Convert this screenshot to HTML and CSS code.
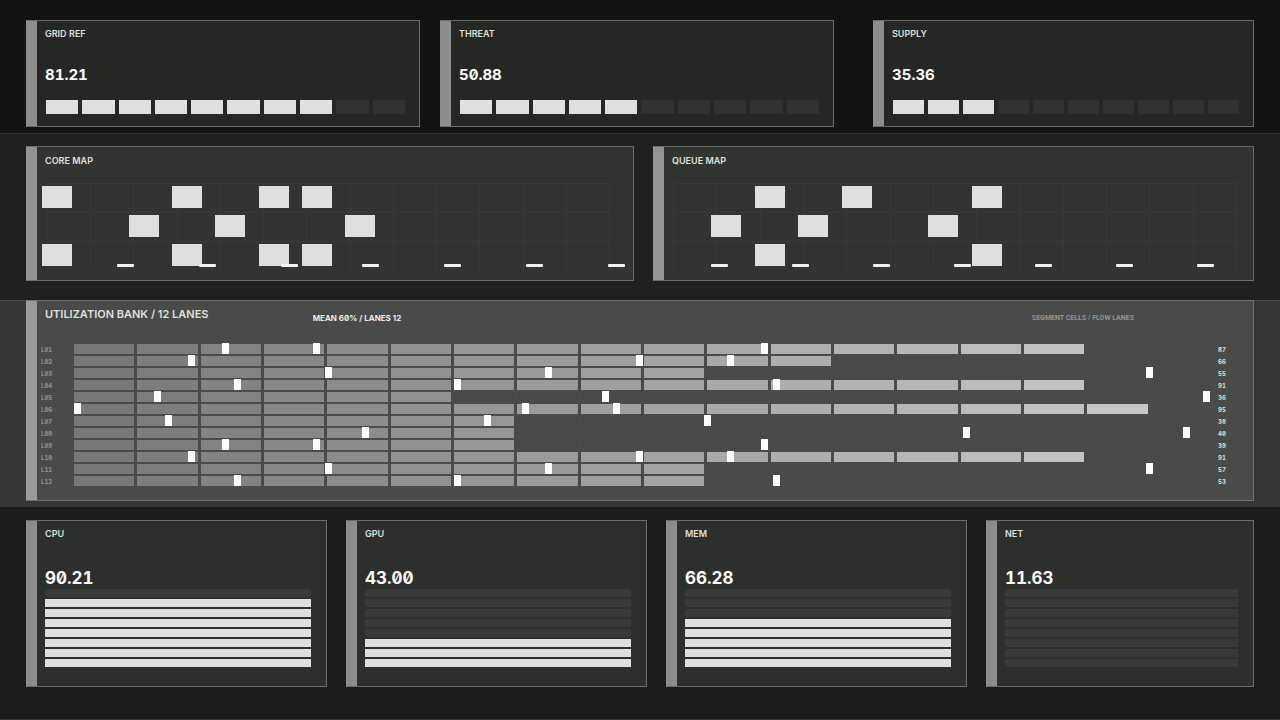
FILE: index.html
```html
<!DOCTYPE html>
<html lang="en">
<head>
<meta charset="utf-8">
<meta name="viewport" content="width=device-width, initial-scale=1">
<title>Utilization Bank</title>
<link rel="stylesheet" href="styles.css">
</head>
<body>
<main>
  <section class="band band-status">
    <article class="panel gauge">
      <h2 class="label">GRID REF</h2>
      <p class="value">81.21</p>
      <div class="cells" data-total="10" data-on="8"></div>
    </article>
    <article class="panel gauge">
      <h2 class="label">THREAT</h2>
      <p class="value">50.88</p>
      <div class="cells" data-total="10" data-on="5"></div>
    </article>
    <article class="panel gauge gauge-apart">
      <h2 class="label">SUPPLY</h2>
      <p class="value">35.36</p>
      <div class="cells" data-total="10" data-on="3"></div>
    </article>
  </section>

  <section class="band band-maps">
    <article class="panel map map-core">
      <h2 class="label">CORE MAP</h2>
      <div class="board" data-rows="0,3,5,6|2,4,7|0,3,5,6"></div>
      <div class="dashes"></div>
    </article>
    <article class="panel map map-queue">
      <h2 class="label">QUEUE MAP</h2>
      <div class="board" data-rows="2,4,7|1,3,6|2,7"></div>
      <div class="dashes"></div>
    </article>
  </section>

  <section class="band band-bank">
    <article class="panel bank">
      <header class="bank-head">
        <h1 class="bank-title">UTILIZATION BANK / 12 LANES</h1>
        <p class="bank-mean">MEAN 60% / LANES 12</p>
        <p class="bank-note">SEGMENT CELLS / FLOW LANES</p>
      </header>
      <div class="lanes"></div>
    </article>
  </section>

  <section class="band band-load">
    <article class="panel load">
      <h2 class="label">CPU</h2>
      <p class="value value-large">90.21</p>
      <div class="stack" data-total="8" data-on="7"></div>
    </article>
    <article class="panel load">
      <h2 class="label">GPU</h2>
      <p class="value value-large">43.00</p>
      <div class="stack" data-total="8" data-on="3"></div>
    </article>
    <article class="panel load">
      <h2 class="label">MEM</h2>
      <p class="value value-large">66.28</p>
      <div class="stack" data-total="8" data-on="5"></div>
    </article>
    <article class="panel load">
      <h2 class="label">NET</h2>
      <p class="value value-large">11.63</p>
      <div class="stack" data-total="8" data-on="0"></div>
    </article>
  </section>
</main>
<script src="dashboard.js"></script>
</body>
</html>
```

FILE: styles.css
```css
* {
  box-sizing: border-box;
}

body {
  margin: 0;
  background: #1a1c19;
  color: #dee0dd;
  font-family: Inter, Roboto, sans-serif;
  font-feature-settings: "zero" 1, "tnum" 1;
}

h1, h2, p {
  margin: 0;
}

/* Full-width bands */
.band {
  display: grid;
  padding: 0 26px;
}

.band-status {
  grid-template-columns: 394fr 394fr 400fr;
  column-gap: 20px;
  padding-top: 20px;
  padding-bottom: 6px;
  background: #111410;
}

.band-maps {
  grid-template-columns: 608fr 601fr;
  column-gap: 19px;
  padding-top: 12px;
  padding-bottom: 19px;
  border-top: 1px solid #313330;
  background: #1f211e;
}

.band-bank {
  padding-bottom: 6px;
  background: #353734;
  border-top: 1px solid #454744;
}

.band-load {
  grid-template-columns: 301fr 301fr 301fr 268fr;
  column-gap: 19px;
  padding-top: 13px;
  padding-bottom: 32px;
  border-bottom: 1px solid #343633;
  background: #1a1c19;
}

/* Panels with a thick left rail */
.panel {
  --rail: #8c8e8b;
  --fill: #252724;
  position: relative;
  padding: 7px 15px 12px 18px;
  border: 1px solid #6a6c69;
  border-left-color: var(--rail);
  background: linear-gradient(to right, var(--rail) 10px, var(--fill) 10px);
}

.label {
  font-size: 9px;
  font-weight: 600;
  line-height: 12px;
}

.value {
  margin-top: 25px;
  color: #fbfdfa;
  font-size: 15px;
  font-weight: 700;
  line-height: 20px;
}

.gauge {
  padding-right: 14px;
}

.gauge-apart {
  margin-left: 19px;
}

.cells {
  display: flex;
  gap: 4px;
  height: 14px;
  margin-top: 15px;
  margin-left: 1px;
}

.cell {
  flex: 1;
  background: #30322f;
}

.cell.on {
  background: #dee0dd;
}

/* Maps */
.map {
  --rail: #939592;
  --fill: #323431;
  padding: 8px 0 14px;
}

.map .label {
  padding-left: 18px;
}

.board {
  position: relative;
  display: grid;
  grid-template-columns: repeat(13, 1fr);
  grid-template-rows: repeat(3, 22px);
  row-gap: 7px;
  margin-top: 19px;
}

.map-core .board {
  margin-left: 15px;
  margin-right: 28px;
}

.map-queue .board {
  margin-left: 14px;
  margin-right: 21px;
}

.mesh {
  position: absolute;
  inset: -3px -5px -4px 5px;
  display: grid;
  grid-template-columns: repeat(13, 1fr);
  grid-template-rows: repeat(3, 29px);
  border-right: 1px solid #383a37;
}

.mesh-cell {
  border-top: 1px solid #383a37;
  border-left: 1px solid #383a37;
}

.block {
  position: relative;
  width: 30px;
  background: #dee0dd;
}

.dashes {
  position: absolute;
  bottom: 13px;
  display: flex;
  justify-content: space-between;
}

.map-core .dashes {
  left: 90px;
  right: 8px;
}

.map-queue .dashes {
  left: 57px;
  right: 39px;
}

.dash {
  width: 17px;
  height: 3px;
  border-radius: 1px;
  background: #f2f4f1;
}

/* Utilization bank */
.bank {
  --rail: #999b98;
  --fill: #494b48;
  margin-top: -1px;
  padding: 5px 0 14px;
  border-color: #6e706d;
  border-left-color: var(--rail);
}

.bank-head {
  display: grid;
  grid-template-columns: 268fr 720fr auto;
  align-items: start;
  padding: 0 119px 0 18px;
}

.bank-title {
  font-size: 11px;
  font-weight: 600;
  line-height: 16px;
  font-feature-settings: "zero" 1;
}

.bank-mean,
.bank-note {
  padding-top: 6px;
  line-height: 12px;
}

.bank-mean {
  color: #fbfdfa;
  font-size: 8px;
  font-weight: 600;
  font-feature-settings: "zero" 1;
}

.bank-note {
  color: #939592;
  font-family: Roboto, Inter, sans-serif;
  font-size: 7px;
  font-weight: 700;
}

.lanes {
  margin-top: 18px;
}

.lane {
  display: grid;
  grid-template-columns: 33px 1fr 39px;
  align-items: center;
  height: 12px;
  padding-left: 14px;
  font-size: 6px;
  font-weight: 700;
  line-height: 12px;
}

.lane-name,
.lane-value {
  padding-top: 2px;
}

.lane-name {
  color: #939592;
}

.lane-value {
  padding-left: 4px;
  color: #dee0dd;
}

.track {
  position: relative;
  display: flex;
  gap: 3px;
  height: 10px;
  padding-right: 3px;
}

.segment {
  flex: 1;
  background: #484a47;
}

.marker {
  position: absolute;
  top: -1px;
  width: 7px;
  height: 11px;
  background: #fdfffc;
}

/* Load stacks */
.load {
  --fill: #2d2f2c;
  padding-bottom: 19px;
}

.load .value {
  margin-top: 28px;
}

.value.value-large {
  font-size: 17px;
}

.stack {
  display: grid;
  grid-auto-rows: 8px;
  row-gap: 2px;
  margin-top: 1px;
}

.stack .cell {
  background: #383a37;
}

.stack .cell.on {
  background: #dee0dd;
}
```

FILE: dashboard.js
```js
const make = (parent, className, text) => {
  const el = document.createElement("div");
  el.className = className;
  if (text !== undefined) el.textContent = text;
  parent.append(el);
  return el;
};

// Gauges fill from the left
document.querySelectorAll(".cells").forEach((row) => {
  for (let i = 0; i < Number(row.dataset.total); i++) {
    make(row, i < Number(row.dataset.on) ? "cell on" : "cell");
  }
});

// Stacks fill from the bottom
document.querySelectorAll(".stack").forEach((stack) => {
  const total = Number(stack.dataset.total);
  for (let i = 0; i < total; i++) {
    make(stack, i >= total - Number(stack.dataset.on) ? "cell on" : "cell");
  }
});

document.querySelectorAll(".board").forEach((board) => {
  const mesh = make(board, "mesh");
  for (let i = 0; i < 39; i++) make(mesh, "mesh-cell");
  board.dataset.rows.split("|").forEach((row, r) => {
    row.split(",").forEach((col) => {
      make(board, "block").style.gridArea = `${r + 1} / ${Number(col) + 1}`;
    });
  });
});

document.querySelectorAll(".dashes").forEach((row) => {
  for (let i = 0; i < 7; i++) make(row, "dash");
});

// Lane value, lit segments, and marker positions in percent of the track
const lanes = [
  [87, 16, [13, 21, 60.3]],
  [66, 12, [10, 49.3, 57.3]],
  [55, 10, [22, 41.3, 94]],
  [91, 16, [14, 33.3, 61.3]],
  [36, 6, [7, 46.3, 99]],
  [95, 17, [0, 39.3, 47.3]],
  [38, 7, [8, 36, 55.3]],
  [40, 7, [25.3, 78, 97.3]],
  [39, 7, [13, 21, 60.3]],
  [91, 16, [10, 49.3, 57.3]],
  [57, 10, [22, 41.3, 94]],
  [53, 10, [14, 33.3, 61.3]],
];
const SEGMENTS = 18;
const bank = document.querySelector(".lanes");

lanes.forEach(([value, lit, markers], n) => {
  const lane = make(bank, "lane");
  make(lane, "lane-name", "L" + String(n + 1).padStart(2, "0"));
  const track = make(lane, "track");
  for (let i = 0; i < SEGMENTS; i++) {
    const segment = make(track, "segment");
    if (i < lit) {
      const g = Math.round(120 + i * 4.8);
      segment.style.background = `rgb(${g}, ${g + 2}, ${g - 1})`;
    }
  }
  markers.forEach((at) => {
    make(track, "marker").style.left = at + "%";
  });
  make(lane, "lane-value", value);
});
```
